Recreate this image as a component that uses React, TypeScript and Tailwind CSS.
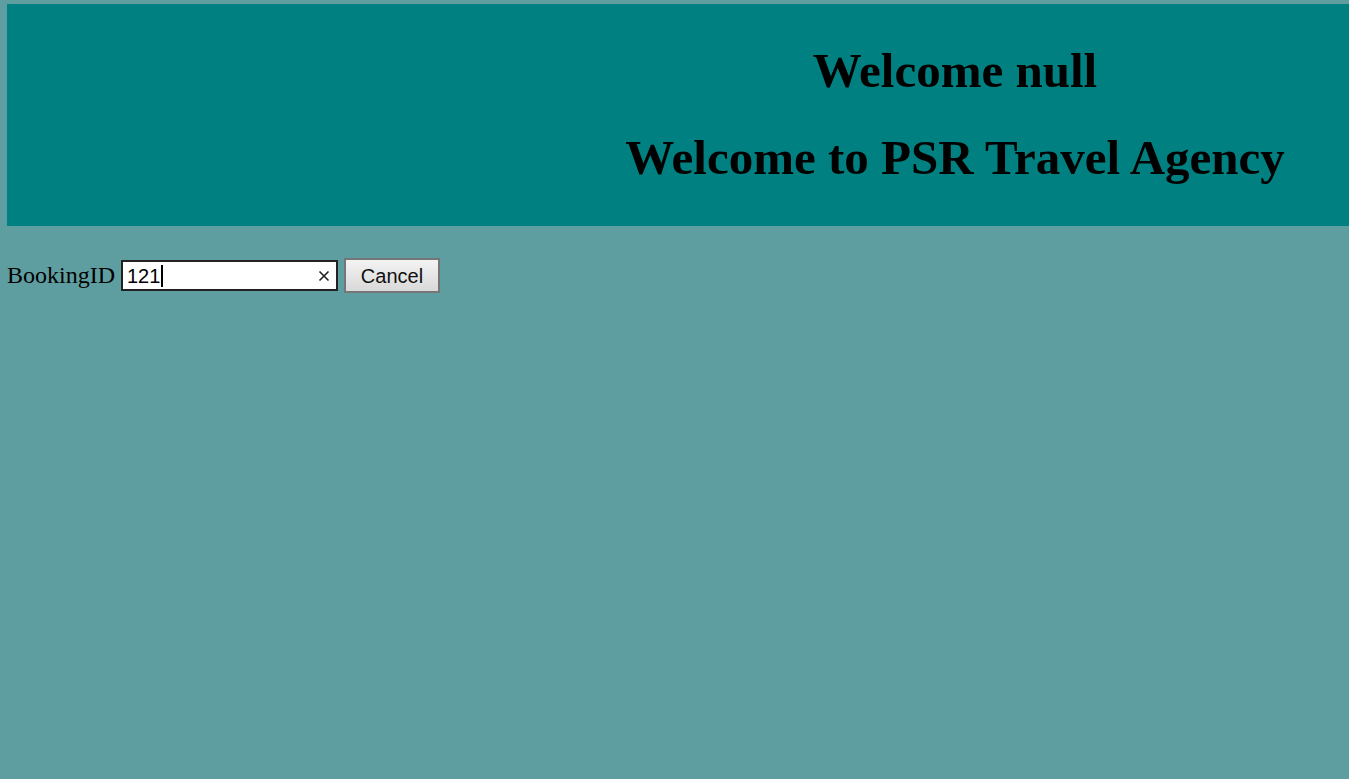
export default function App() {
  return (
    <div className="min-h-[779px] w-full overflow-hidden bg-[#5f9ea0] pl-[7px] pt-[4px] text-black">
      <header className="flex bg-[#008080] py-[8px] font-['Liberation_Serif',serif]">
        <div className="w-[554px] shrink-0"></div>
        <div className="flex-1 text-center">
          <h1 className="my-[32px] text-[49px] leading-[54px] font-bold">Welcome null</h1>
          <h1 className="my-[32px] text-[49px] leading-[56px] font-bold">Welcome to PSR Travel Agency</h1>
        </div>
      </header>

      <div className="mt-[32px] flex items-center">
        <label className="mr-[6px] font-['Liberation_Serif',serif] text-[24px] leading-[28px] -translate-y-[1px]">BookingID</label>
        <div className="flex h-[31px] w-[217px] items-center border-2 border-[#222] bg-white pl-[4px] pr-[6px] font-['Liberation_Sans',sans-serif] text-[20px]">
          <span className="leading-none">121</span>
          <span className="ml-[1px] h-[22px] w-[2px] bg-black"></span>
          <span className="flex-1"></span>
          <svg width="12" height="12" viewBox="0 0 12 12" className="text-[#222]">
            <path d="M1.5 1.5 L10.5 10.5 M10.5 1.5 L1.5 10.5" stroke="currentColor" strokeWidth="1.6" />
          </svg>
        </div>
        <button className="ml-[6px] h-[35px] w-[96px] border-2 border-[#767676] bg-gradient-to-b from-[#f3f3f3] to-[#d9d9d9] font-['Liberation_Sans',sans-serif] text-[20px] text-[#111]">
          Cancel
        </button>
      </div>
    </div>
  )
}
